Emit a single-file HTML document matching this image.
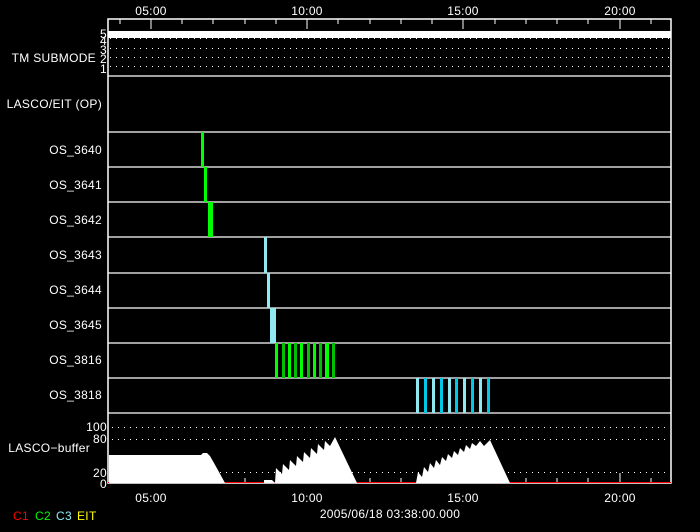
<!DOCTYPE html>
<html><head><style>
html,body{margin:0;padding:0;background:#000;}
svg{display:block;}
text{font-family:"Liberation Sans","DejaVu Sans",sans-serif;fill:#fff;font-size:12px;letter-spacing:0.3px;}
</style></head><body>
<svg width="700" height="532" viewBox="0 0 700 532" xmlns="http://www.w3.org/2000/svg">
<rect width="700" height="532" fill="#000"/>
<rect x="108" y="19" width="563" height="464" fill="none" stroke="#fff" stroke-width="1.5"/>
<g stroke="#fff" stroke-width="1">
<line x1="120" y1="19" x2="120" y2="24"/><line x1="151" y1="19" x2="151" y2="29"/>
<line x1="182" y1="19" x2="182" y2="24"/><line x1="213" y1="19" x2="213" y2="24"/>
<line x1="245" y1="19" x2="245" y2="24"/><line x1="276" y1="19" x2="276" y2="24"/>
<line x1="307" y1="19" x2="307" y2="29"/><line x1="338" y1="19" x2="338" y2="24"/>
<line x1="370" y1="19" x2="370" y2="24"/><line x1="401" y1="19" x2="401" y2="24"/>
<line x1="432" y1="19" x2="432" y2="24"/><line x1="463" y1="19" x2="463" y2="29"/>
<line x1="495" y1="19" x2="495" y2="24"/><line x1="526" y1="19" x2="526" y2="24"/>
<line x1="557" y1="19" x2="557" y2="24"/><line x1="588" y1="19" x2="588" y2="24"/>
<line x1="620" y1="19" x2="620" y2="29"/><line x1="651" y1="19" x2="651" y2="24"/>
</g>
<g stroke="#fff" stroke-width="1">
<line x1="120" y1="483" x2="120" y2="478"/><line x1="151" y1="483" x2="151" y2="473"/>
<line x1="182" y1="483" x2="182" y2="478"/><line x1="213" y1="483" x2="213" y2="478"/>
<line x1="245" y1="483" x2="245" y2="478"/><line x1="276" y1="483" x2="276" y2="478"/>
<line x1="307" y1="483" x2="307" y2="473"/><line x1="338" y1="483" x2="338" y2="478"/>
<line x1="370" y1="483" x2="370" y2="478"/><line x1="401" y1="483" x2="401" y2="478"/>
<line x1="432" y1="483" x2="432" y2="478"/><line x1="463" y1="483" x2="463" y2="473"/>
<line x1="495" y1="483" x2="495" y2="478"/><line x1="526" y1="483" x2="526" y2="478"/>
<line x1="557" y1="483" x2="557" y2="478"/><line x1="588" y1="483" x2="588" y2="478"/>
<line x1="620" y1="483" x2="620" y2="473"/><line x1="651" y1="483" x2="651" y2="478"/>
</g>
<rect x="108" y="31" width="563" height="7" fill="#fff"/>
<g stroke="#fff" stroke-width="1" stroke-dasharray="1 5">
<line x1="110" y1="38.5" x2="670" y2="38.5"/><line x1="110" y1="48.5" x2="670" y2="48.5"/>
<line x1="110" y1="57.5" x2="670" y2="57.5"/><line x1="110" y1="66.5" x2="670" y2="66.5"/>
<line x1="112" y1="427.5" x2="670" y2="427.5"/><line x1="112" y1="439.5" x2="670" y2="439.5"/>
<line x1="112" y1="472.5" x2="670" y2="472.5"/>
</g>
<g stroke="#fff" stroke-width="1.3">
<line x1="108" y1="76" x2="671" y2="76"/><line x1="108" y1="132" x2="671" y2="132"/>
<line x1="108" y1="167" x2="671" y2="167"/><line x1="108" y1="202" x2="671" y2="202"/>
<line x1="108" y1="237" x2="671" y2="237"/><line x1="108" y1="273" x2="671" y2="273"/>
<line x1="108" y1="308" x2="671" y2="308"/><line x1="108" y1="343" x2="671" y2="343"/>
<line x1="108" y1="378" x2="671" y2="378"/><line x1="108" y1="413" x2="671" y2="413"/>
</g>
<rect x="201" y="132" width="3" height="35" fill="#00ff00"/>
<rect x="204" y="167" width="3" height="35" fill="#00ff00"/>
<rect x="208" y="202" width="5" height="35" fill="#00ff00"/>
<rect x="264" y="237" width="3" height="36" fill="#90e8f0"/>
<rect x="267" y="273" width="3" height="35" fill="#90e8f0"/>
<rect x="270" y="308" width="6" height="35" fill="#90e8f0"/>
<g>
<rect x="275" y="343" width="3" height="35" fill="#00ff00"/>
<rect x="282" y="343" width="3" height="35" fill="#00c000"/>
<rect x="288" y="343" width="3" height="35" fill="#00ff00"/>
<rect x="294" y="343" width="3" height="35" fill="#00c000"/>
<rect x="300" y="343" width="3" height="35" fill="#00ff00"/>
<rect x="307" y="343" width="3" height="35" fill="#00c000"/>
<rect x="313" y="343" width="3" height="35" fill="#00ff00"/>
<rect x="319" y="343" width="3" height="35" fill="#00c000"/>
<rect x="325" y="343" width="4" height="35" fill="#00ff00"/>
<rect x="332" y="343" width="3" height="35" fill="#00c000"/>
</g>
<g>
<rect x="416" y="378" width="3" height="35" fill="#90e8f0"/>
<rect x="424" y="378" width="3" height="35" fill="#00c8e8"/>
<rect x="432" y="378" width="3" height="35" fill="#90e8f0"/>
<rect x="440" y="378" width="3" height="35" fill="#00c8e8"/>
<rect x="448" y="378" width="3" height="35" fill="#90e8f0"/>
<rect x="455" y="378" width="3" height="35" fill="#00c8e8"/>
<rect x="463" y="378" width="3" height="35" fill="#90e8f0"/>
<rect x="471" y="378" width="3" height="35" fill="#00c8e8"/>
<rect x="479" y="378" width="3" height="35" fill="#90e8f0"/>
<rect x="487" y="378" width="3" height="35" fill="#00c8e8"/>
</g>
<line x1="108" y1="482.5" x2="671" y2="482.5" stroke="#ff0000" stroke-width="1"/>
<polygon fill="#fff" points="109,483 109,455 201,455 203,453 207,453 210,456 214,463 219,472 225,483"/>
<polygon fill="#fff" points="264,483 264,480 272,480 275,483"/>
<polygon fill="#fff" points="275,483 276,468 282,474 283,464 289,470 290,460 296,466 297,456 303,462 304,452 310,458 311,448 317,454 318,444 324,450 325,441 330,446 335,437 357,483"/>
<polygon fill="#fff" points="416,483 418,472 422,477 424,467 428,472 430,463 434,468 436,460 440,465 442,457 446,461 448,454 452,458 454,451 458,455 460,448 464,452 466,445 470,449 472,443 476,446 480,441 484,446 490,440 510,483"/>
<g style="font-size:13px;letter-spacing:1px">
<text x="151" y="15" text-anchor="middle">05:00</text>
<text x="307" y="15" text-anchor="middle">10:00</text>
<text x="463" y="15" text-anchor="middle">15:00</text>
<text x="620" y="15" text-anchor="middle">20:00</text>
<text x="151" y="502" text-anchor="middle">05:00</text>
<text x="307" y="502" text-anchor="middle">10:00</text>
<text x="463" y="502" text-anchor="middle">15:00</text>
<text x="620" y="502" text-anchor="middle">20:00</text>
<text x="390" y="518" text-anchor="middle">2005/06/18 03:38:00.000</text>
</g>
<g text-anchor="end">
<text x="107" y="38" font-size="10">5</text>
<text x="107" y="45" font-size="10">4</text>
<text x="107" y="54" font-size="10">3</text>
<text x="107" y="63" font-size="10">2</text>
<text x="107" y="73" font-size="10">1</text>
<text x="96" y="62">TM SUBMODE</text>
<text x="102" y="108">LASCO/EIT (OP)</text>
<text x="102" y="154">OS_3640</text>
<text x="102" y="189">OS_3641</text>
<text x="102" y="224">OS_3642</text>
<text x="102" y="259">OS_3643</text>
<text x="102" y="294">OS_3644</text>
<text x="102" y="329">OS_3645</text>
<text x="102" y="364">OS_3816</text>
<text x="102" y="399">OS_3818</text>
<text x="107" y="431" font-size="13">100</text>
<text x="107" y="443" font-size="13">80</text>
<text x="90" y="452">LASCO−buffer</text>
<text x="107" y="477" font-size="13">20</text>
<text x="107" y="488" font-size="13">0</text>
</g>
<text x="13" y="520" font-size="10" style="fill:#ff0000">C1</text>
<text x="35" y="520" font-size="10" style="fill:#00ff00">C2</text>
<text x="56" y="520" font-size="10" style="fill:#90e8f0">C3</text>
<text x="77" y="520" font-size="10" style="fill:#ffff00">EIT</text>
</svg>
</body></html>
